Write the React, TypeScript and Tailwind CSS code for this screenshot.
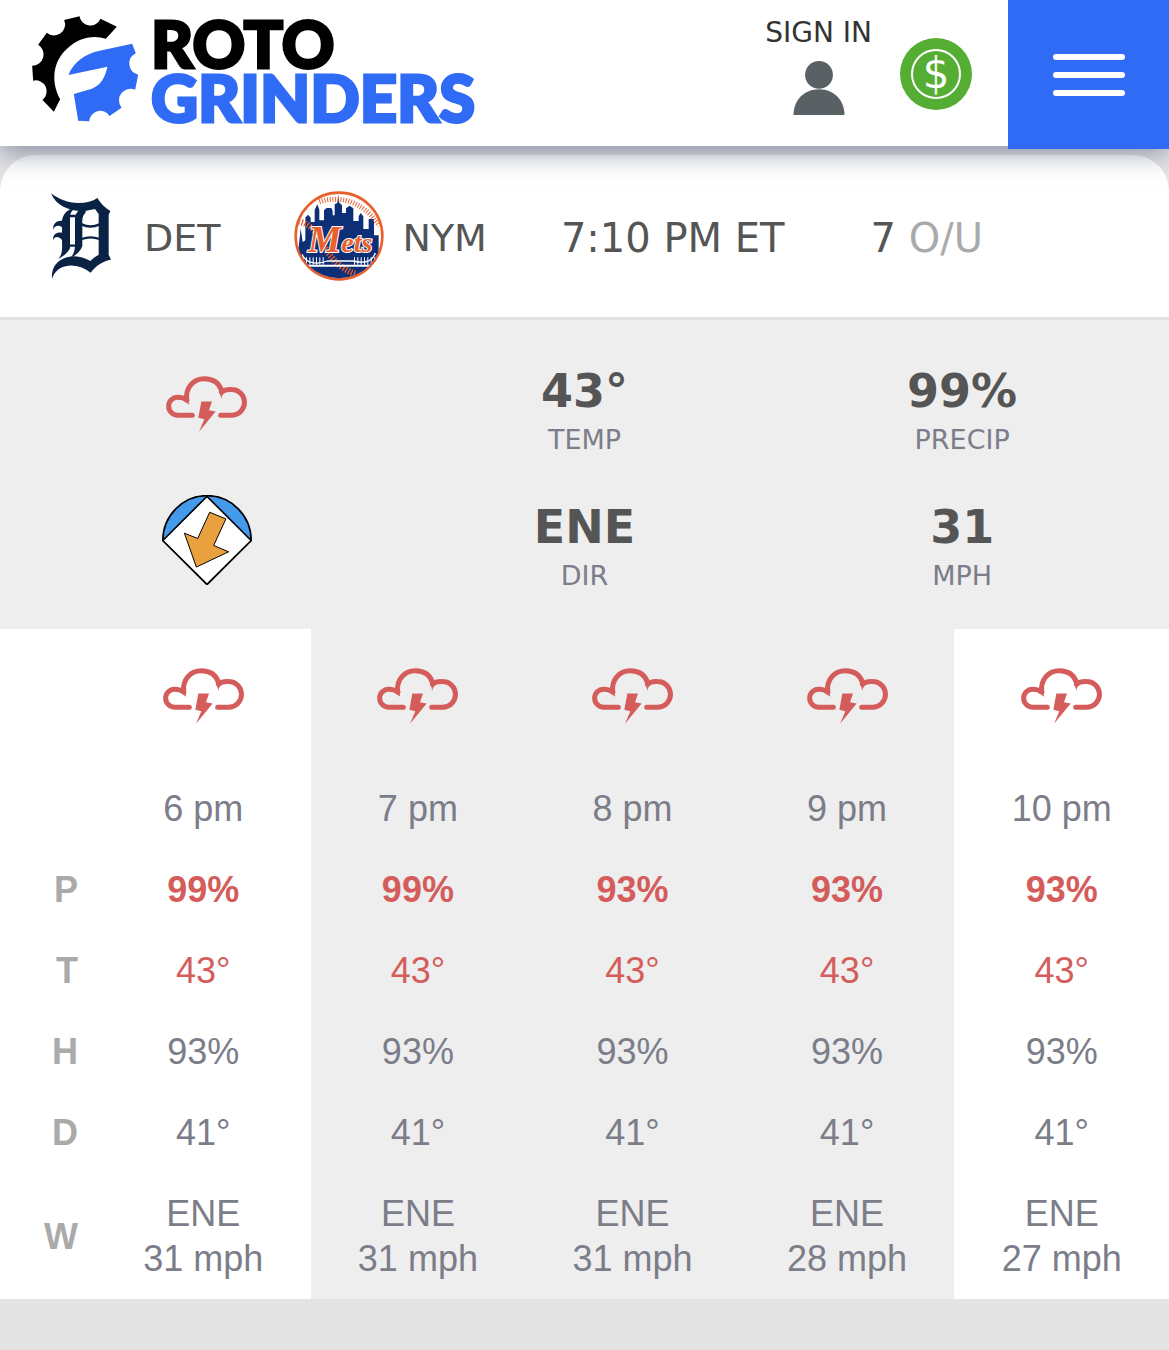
import React from 'react';

interface Hour {
  time: string;
  precip: string;
  temp: string;
  humidity: string;
  dew: string;
  wind: string;
  inGame: boolean;
}

const HOURS: Hour[] = [
  { time: '6 pm', precip: '99%', temp: '43°', humidity: '93%', dew: '41°', wind: '31 mph', inGame: false },
  { time: '7 pm', precip: '99%', temp: '43°', humidity: '93%', dew: '41°', wind: '31 mph', inGame: true },
  { time: '8 pm', precip: '93%', temp: '43°', humidity: '93%', dew: '41°', wind: '31 mph', inGame: true },
  { time: '9 pm', precip: '93%', temp: '43°', humidity: '93%', dew: '41°', wind: '28 mph', inGame: true },
  { time: '10 pm', precip: '93%', temp: '43°', humidity: '93%', dew: '41°', wind: '27 mph', inGame: false },
];

function GearLogo() {
  return (
    <svg viewBox="36 46 320 318" className="w-[107px] h-[106px] flex-shrink-0" aria-hidden="true">
      <path
        d="M290 78 L241 54 A33 33 0 0 1 178 47 L132 58 A33 33 0 0 1 80 96 L54 132 A34 34 0 0 1 36 195 L39 240 A33 33 0 0 1 67 298 L101 333 L120 296 C90 240 100 180 140 145 C172 113 215 102 257 114 Z"
        fill="#000"
      />
      <path
        d="M145 223 C160 184 195 160 235 151 L336 129 L347 158 A34 34 0 0 0 354 222 L345 267 A35 35 0 0 0 304 321 L268 346 A33 33 0 0 0 207 362 L174 360 L161 280 L215 264 C245 250 253 232 262 198 L145 223 Z"
        fill="#306bf5"
      />
    </svg>
  );
}

function StormIcon() {
  return (
    <svg viewBox="80 50 243 167" className="w-[81px] h-[56px] inline-block" role="img" aria-label="Thunderstorm">
      <g fill="none" stroke="#d45d5c" strokeWidth="15">
        <path d="M159 167H115A27 27 0 0 1 115 113C127 113 136 116 143 122" strokeLinecap="round" />
        <path d="M142 124C137 84 162 58 195 58C220 58 240 71 248 96" />
        <path d="M246 98C255 91 266 89 277 90A38 38 0 0 1 277 167H244" strokeLinecap="round" />
      </g>
      <path d="M134 110L150 112C147 120 147 128 150 136L130 122ZM241 96L257 98C249 105 246 111 246 119Z" fill="#d45d5c" />
      <path d="M186 126H218L209 152L229 156L179 217L195 179L177 175Z" fill="#d45d5c" />
    </svg>
  );
}

function WindIcon() {
  return (
    <svg viewBox="66 404 270 271" className="size-[90px]" role="img" aria-label="Wind blowing in from right center">
      <g stroke="#000" strokeLinejoin="round">
        <path d="M68 541A133 135 0 0 1 334 541L201 673Z" fill="#459aeb" strokeWidth="5" />
        <path d="M201 408L334 541L201 673L68 541Z" fill="#fff" strokeWidth="5" />
        <path d="M209 456L258 476L221 556L266 575L169 621L133 519L173 535Z" fill="#e9a140" strokeWidth="3" />
      </g>
    </svg>
  );
}

function TigersLogo() {
  return (
    <svg viewBox="109 151 270 270" className="size-[90px]" role="img" aria-label="Detroit">
      <g fill="#0a2345">
        <path d="M154 158C178 176 205 187 235 187C260 187 279 182 293 172C303 188 315 201 332 211L327 222V342L334 357C312 360 288 375 273 396C252 380 229 373 207 375C181 377 164 392 157 415C154 382 171 359 202 350C231 342 254 351 272 361C281 352 289 346 297 342V220L286 205L260 210C222 215 170 201 154 158Z" />
        <path d="M229 202C214 209 211 220 211 233V322C207 333 193 347 176 354C188 341 188 330 187 298C174 284 165 289 160 298C160 280 171 274 187 276V260C174 251 165 257 160 267C160 248 171 239 187 240C190 218 206 203 229 202Z" />
        <path d="M245 203C258 205 262 211 255 219C248 227 248 234 248 250V317C241 333 229 345 213 351C225 337 226 324 226 306V234C227 219 235 210 245 203Z" />
      </g>
      <path
        d="M246 251Q272 264 300 251M246 295Q272 285 300 295M208 226H230M208 315H230"
        fill="none"
        stroke="#0a2345"
        strokeWidth="7"
      />
    </svg>
  );
}

function MetsLogo() {
  return (
    <svg viewBox="46 32 270 270" className="size-[90px]" role="img" aria-label="New York Mets">
      <defs>
        <clipPath id="ball">
          <circle cx="181" cy="167" r="127" />
        </clipPath>
      </defs>
      <circle cx="181" cy="167" r="130" fill="#fff" stroke="#e8602c" strokeWidth="8" />
      <g clipPath="url(#ball)">
        <path
          d="M40 200H60L66 145L72 185L80 180V112L88 103L96 112V125H108V88L116 72L122 88V120H136V90L144 83H158L162 92V105H168V72L176 68L179 42L182 68L190 74V98H202V84L213 76L224 84V122H240V108L246 98L254 108V146H270V116H286V165H300V230H320V310H40Z"
          fill="#0d2f78"
        />
        <g fill="none" stroke="#e8602c">
          <path d="M122 64C180 46 250 58 302 136" strokeDasharray="3 5" strokeWidth="15" />
          <path d="M60 124C92 130 112 150 132 188C150 225 180 265 234 282" strokeDasharray="4 5" strokeWidth="19" />
        </g>
        <path d="M70 222C84 256 126 250 146 242H222C250 248 278 250 290 218" fill="none" stroke="#fff" strokeWidth="4" />
        <path d="M72 242H142M226 242H294" stroke="#fff" strokeWidth="22" strokeDasharray="3 7" />
        <path d="M62 256H300" stroke="#fff" strokeWidth="6" />
      </g>
      <text
        x="88"
        y="216"
        fill="#e8602c"
        stroke="#fff"
        strokeWidth="6"
        paintOrder="stroke"
        className="font-['Liberation_Serif',serif] text-[112px] font-bold italic"
      >
        M<tspan className="text-[84px]">ets</tspan>
      </text>
    </svg>
  );
}

function Header() {
  return (
    <header className="relative z-10 h-[146px] flex items-start bg-white shadow-[0_6px_26px_rgba(50,65,100,0.55)]">
      <a
        href="#"
        className="pl-8 pt-4 flex items-start gap-3 font-['Lato_Black','Lato',sans-serif] font-black text-[65px] leading-[54px] [-webkit-text-stroke:3px_currentColor]"
      >
        <GearLogo />
        <span className="flex flex-col">
          <span className="text-black">ROTO</span>
          <span className="text-[#306bf5]">GRINDERS</span>
        </span>
      </a>
      <a href="#" className="ml-auto mt-[18px] flex flex-col items-center gap-[13px] text-[28px] leading-[30px] text-[#333]">
        SIGN IN
        <svg viewBox="160 182 154 163" className="w-[52px] h-[54px]" fill="#5a6165" aria-hidden="true">
          <circle cx="237" cy="224" r="42" />
          <path d="M160 345C160 300 192 267 237 267C282 267 314 300 314 345Z" />
        </svg>
      </a>
      <button
        type="button"
        aria-label="Deposit"
        className="ml-7 mt-[38px] size-[72px] rounded-full bg-[#55ae33] flex items-center justify-center"
      >
        <span className="size-[50px] rounded-full border-2 border-white flex items-center justify-center text-white text-[42px] leading-none">
          $
        </span>
      </button>
      <button
        type="button"
        aria-label="Menu"
        className="ml-9 w-[161px] h-[149px] bg-[#306bf5] flex flex-col items-center justify-center gap-3"
      >
        <span className="w-[72px] h-[6px] rounded-full bg-white" />
        <span className="w-[72px] h-[6px] rounded-full bg-white" />
        <span className="w-[72px] h-[6px] rounded-full bg-white" />
      </button>
    </header>
  );
}

function Matchup() {
  return (
    <div className="mt-[9px] px-9 py-9 flex items-center gap-[74px] rounded-t-[36px] bg-white border-b-3 border-[#e2e2e2] text-[38px] leading-[48px] text-[#555] whitespace-nowrap">
      <div className="flex items-center gap-[18px]">
        <TigersLogo />
        <span className="pt-1">DET</span>
      </div>
      <div className="flex items-center gap-[18px]">
        <MetsLogo />
        <span className="pt-1">NYM</span>
      </div>
      <span className="pt-1 text-[40px]">7:10 PM ET</span>
      <span className="pt-1 ml-3 text-[40px]">
        7 <span className="text-[#aaa]">O/U</span>
      </span>
    </div>
  );
}

function Stat({ value, label }: { value: string; label: string }) {
  return (
    <div className="pt-2 text-center">
      <div className="text-[46px] leading-[54px] font-bold text-[#555]">{value}</div>
      <div className="text-[27px] leading-[44px] text-[#7b7d89]">{label}</div>
    </div>
  );
}

function Summary() {
  return (
    <div className="px-[18px] pt-9 pb-px grid grid-cols-3 auto-rows-[136px] bg-[#eee]">
      <div className="h-24 flex items-center justify-center">
        <StormIcon />
      </div>
      <Stat value="43°" label="TEMP" />
      <Stat value="99%" label="PRECIP" />
      <div className="h-24 flex items-center justify-center">
        <WindIcon />
      </div>
      <Stat value="ENE" label="DIR" />
      <Stat value="31" label="MPH" />
    </div>
  );
}

interface RowProps {
  label: string;
  className?: string;
  render: (hour: Hour) => React.ReactNode;
}

function HourRow({ label, className = '', render }: RowProps) {
  return (
    <tr className={className}>
      <th scope="row" className="py-[18px] pr-[18px] text-right font-bold text-[#aaa]">
        {label}
      </th>
      {HOURS.map((hour) => (
        <td key={hour.time} className={hour.inGame ? 'py-[18px] bg-[#eee]' : 'py-[18px]'}>
          {render(hour)}
        </td>
      ))}
    </tr>
  );
}

function HourlyTable() {
  return (
    <table className="w-full table-fixed bg-white text-center text-[36px] leading-[45px] text-[#7b7d89] font-['Liberation_Sans',sans-serif]">
      <colgroup>
        <col className="w-24" />
        <col span={5} />
      </colgroup>
      <thead>
        <tr className="h-[139px]">
          <td />
          {HOURS.map((hour) => (
            <td key={hour.time} className={hour.inGame ? 'pt-[39px] align-top bg-[#eee]' : 'pt-[39px] align-top'}>
              <StormIcon />
            </td>
          ))}
        </tr>
        <tr>
          <td />
          {HOURS.map((hour) => (
            <th
              key={hour.time}
              scope="col"
              className={hour.inGame ? 'py-[18px] font-normal bg-[#eee]' : 'py-[18px] font-normal'}
            >
              {hour.time}
            </th>
          ))}
        </tr>
      </thead>
      <tbody>
        <HourRow label="P" className="font-bold text-[#d45d5c]" render={(h) => h.precip} />
        <HourRow label="T" className="text-[#d45d5c]" render={(h) => h.temp} />
        <HourRow label="H" render={(h) => h.humidity} />
        <HourRow label="D" render={(h) => h.dew} />
        <HourRow
          label="W"
          render={(h) => (
            <>
              ENE
              <br />
              {h.wind}
            </>
          )}
        />
      </tbody>
    </table>
  );
}

export default function App() {
  return (
    <div className="min-h-screen bg-[#e4e4e4] font-['DejaVu_Sans',sans-serif]">
      <Header />
      <main>
        <Matchup />
        <Summary />
        <HourlyTable />
      </main>
    </div>
  );
}
